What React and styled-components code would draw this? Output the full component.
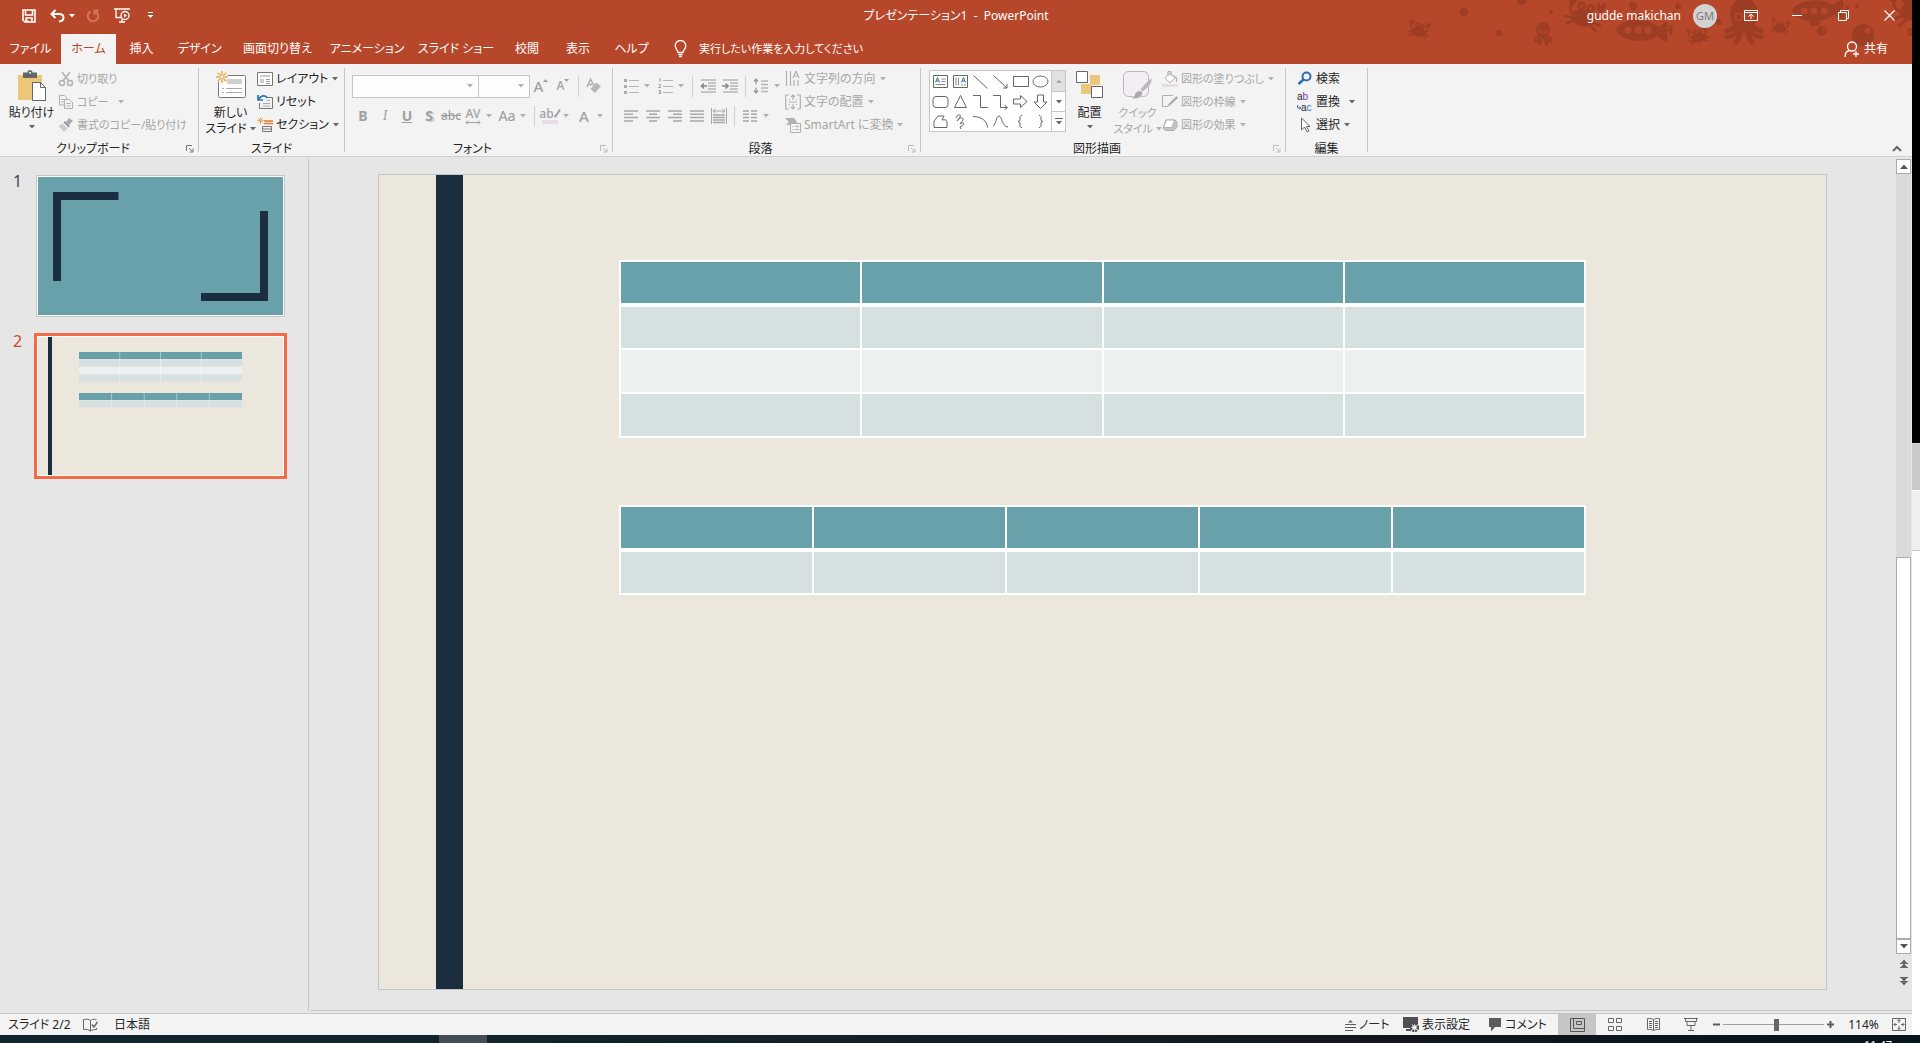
import React, { useState } from "react";
import styled, { createGlobalStyle, css } from "styled-components";

const tabs = [
  { label: "ファイル", width: 61 },
  { label: "ホーム", width: 55 },
  { label: "挿入", width: 51 },
  { label: "デザイン", width: 65 },
  { label: "画面切り替え", width: 91 },
  { label: "アニメーション", width: 88 },
  { label: "スライド ショー", width: 90 },
  { label: "校閲", width: 52 },
  { label: "表示", width: 50 },
  { label: "ヘルプ", width: 57 },
];

const GREY = "#b1b1b1";
const DARK = "#5c5c5c";

/* ---------- icons ---------- */

const Icon = ({ w = 16, h = 16, children, color = "currentColor", sw = 1 }) => (
  <svg width={w} height={h} viewBox={`0 0 ${w} ${h}`} fill="none" stroke={color} strokeWidth={sw} aria-hidden="true">
    {children}
  </svg>
);

const Caret = ({ color = "#666" }) => (
  <svg width="6" height="4" viewBox="0 0 6 4" aria-hidden="true">
    <path d="M0 0h6L3 3.5z" fill={color} />
  </svg>
);

const SaveIcon = () => (
  <Icon w={14} h={14} sw={1.6}>
    <path d="M1 1h12v12H3L1 11z M3.5 1v5h7V1" />
    <path d="M4 13V9h6v4" />
    <path d="M5.5 11v2" />
  </Icon>
);

const UndoIcon = () => (
  <Icon w={15} h={14} sw={2}>
    <path d="M5.5 1L1.5 5l4 4" />
    <path d="M1.5 5H9c6 0 6 7 0 7.500" />
  </Icon>
);

const RedoIcon = () => (
  <Icon w={14} h={14} color="#d4755d" sw={2}>
    <path d="M4.500 2.500A5.200 5.200 0 1 0 9.500 2.500" />
    <path d="M12.500 1.500H8.500V6" />
  </Icon>
);

const ShowIcon = () => (
  <Icon w={17} h={15} sw={1.3}>
    <path d="M0 1h16M2 1v8.500h5M5 14h6M8 11v3" />
    <circle cx="11" cy="7.500" r="4" />
    <path d="M10 5.500v4l3-2z" fill="currentColor" stroke="none" />
  </Icon>
);

const BulbIcon = () => (
  <Icon w={13} h={18} sw={1.3}>
    <path d="M4 12.500C4 10 1.200 9 1.200 5.800a5.300 5.300 0 0 1 10.600 0C11.800 9 9 10 9 12.500z" />
    <path d="M4.500 14.500h4M5 16.500h3" />
  </Icon>
);

const PasteIcon = () => (
  <Icon w={30} h={31}>
    <path d="M1 5h24v25H1z" fill="#edc67c" stroke="none" />
    <path d="M6 2.500h4.500a2.500 2.500 0 0 1 5 0H20V8H6z" fill="#666" stroke="none" />
    <circle cx="13" cy="2.800" r="1" fill="#f3f3f3" stroke="none" />
    <path d="M15.500 12.500h8l5 5v13h-13z" fill="#fff" stroke="#666" />
    <path d="M23.500 12.500v5h5" stroke="#666" />
  </Icon>
);

const NewSlideIcon = () => (
  <Icon w={31} h={30}>
    <rect x="3.500" y="5.500" width="27" height="22" rx="1" fill="#fff" stroke="#777" />
    <path d="M12 9h15v5H12z" fill="#cfcfcf" stroke="none" />
    <path d="M7 18.500h2M11 18.500h16M7 22.500h2M11 22.500h16" stroke="#aaa" />
    <circle cx="7" cy="7" r="6" fill="#f3f3f3" stroke="none" />
    <path d="M7 1v3.500M7 9.500V13M1 7h3.500M9.500 7H13M2.800 2.800L5.200 5.200M8.800 8.800l2.400 2.400M11.200 2.800L8.800 5.200M5.200 8.800l-2.400 2.400" stroke="#e8b04b" strokeWidth="1.600" />
    <circle cx="7" cy="7" r="2" stroke="#e8b04b" />
  </Icon>
);

const CutIcon = () => (
  <Icon color={GREY} sw={1.500}>
    <circle cx="4" cy="12" r="2.500" />
    <circle cx="12" cy="12" r="2.500" />
    <path d="M5.200 9.800L12 1M10.800 9.800L4 1" />
  </Icon>
);

const CopyIcon = () => (
  <Icon color={GREY}>
    <path d="M1.500 1.500h5l2 2V11h-7z" />
    <path d="M3 5.500h3M3 8h3" />
    <path d="M6.500 5.500h5l3 3v6h-8z" fill="#f3f3f3" />
    <path d="M8.500 9.500h4M8.500 12h4" />
  </Icon>
);

const BrushIcon = () => (
  <Icon color="none">
    <path d="M11 1l4 3-4 4-3-3z" fill="#aaa" />
    <path d="M7 4l5 5-1.500 1.500-5-5z" fill="#999" />
    <path d="M4.500 6.500l5 5L6 15 0.500 9z" fill="#cfc8cf" />
  </Icon>
);

const LayoutIcon = () => (
  <Icon color="#777">
    <path d="M.5 1.500h15v13H.5z" fill="#fff" />
    <path d="M3 4h10v2H3z" fill="#ccc" stroke="none" />
    <path d="M3 8h4v4H3z" fill="#ccc" stroke="none" />
    <path d="M9 8.500h4M9 10.500h4M9 12.500h4" stroke="#999" />
  </Icon>
);

const ResetIcon = () => (
  <Icon color="#777">
    <path d="M2.500 9v5.500h13v-11h-5" />
    <path d="M6 9.500h7M6 12h7M10 6.500h3" stroke="#aaa" />
    <path d="M1 1v5h5M1.500 5.500c2-4 7-5 9-1.500" stroke="#2f74b8" strokeWidth="1.700" />
  </Icon>
);

const SectionIcon = () => (
  <Icon color="#777">
    <path d="M7 4h9M7 6.500h9" stroke="#e07b39" strokeWidth="1.500" />
    <path d="M5.500 9.500h9v5h-9zM5.500 12h9" />
    <path d="M3.500 0v7M0 3.500h7M1 1l5 5M6 1L1 6" stroke="#e8a04b" strokeWidth=".8" />
  </Icon>
);

const SizeMark = ({ up }) => (
  <Icon w={5} h={16} color="none">
    <path d={up ? "M0 4h5L2.500 1z" : "M0 1h5L2.500 4z"} fill="#a0a0a0" />
  </Icon>
);

const EraserIcon = () => (
  <Icon color="#a8a8a8">
    <path d="M1 9L4.500 1 8 8M2.300 6.500H6" strokeWidth="1.300" />
    <path d="M10 4.500l5 3.500-6 7-4.500-4z" fill="#bdb5bd" stroke="none" />
  </Icon>
);

const HighlightPen = () => (
  <Icon w={7} h={11} color="#a0a0a0" sw={2}>
    <path d="M6 1.500L2.500 7 .5 9" />
  </Icon>
);

const Bullets = ({ numbered }) => (
  <Icon w={15} h={16} color="#b5b5b5">
    <path d="M5 2.500h10M5 8.500h10M5 14.500h10" strokeWidth="1.200" />
    {numbered ? (
      <path d="M1 0.500h1v3.500M0.500 6.500h2v1.500l-2 1.500h2.500M0.500 12.500h2v3h-2M1 14h1.500" stroke="#999" strokeWidth=".9" />
    ) : (
      <path d="M0 1h3v3H0zM0 7h3v3H0zM0 13h3v3H0z" fill="#aaa" stroke="none" />
    )}
  </Icon>
);

const IndentIcon = ({ out }) => (
  <Icon w={17} h={14} color="#b5b5b5" sw={1.3}>
    <path d="M1 1h15M8 4h8M8 7h8M8 10h8M1 13h15" />
    <path d={out ? "M7 7H1.500M4 4.500L1.500 7 4 9.500" : "M0 7h5.500M3.500 4.500L6 7 3.500 9.500"} stroke="#888" strokeWidth="1.600" />
  </Icon>
);

const LineSpaceIcon = () => (
  <Icon color="#b5b5b5" sw={1.3}>
    <path d="M8 3h7M8 6.500h7M8 10h7M8 13.500h7" />
    <path d="M3 1v5.500M1 3.500L3 1l2 2.500M3 9.500V15M1 12.500L3 15l2-2.500" stroke="#999" />
  </Icon>
);

const alignPaths = {
  left: "M0 1h14M0 4.300h9M0 7.600h14M0 11h9",
  center: "M0 1h14M3 4.300h8M0 7.600h14M3 11h8",
  right: "M0 1h14M5 4.300h9M0 7.600h14M5 11h9",
  justify: "M0 1h14M0 4.300h14M0 7.600h14M0 11h14",
};
const AlignIcon = ({ kind }) => (
  <Icon w={14} h={12} color="#a8a8a8" sw={1.500}>
    <path d={alignPaths[kind]} />
  </Icon>
);

const DistributeIcon = () => (
  <Icon w={16} h={16} color="#a8a8a8">
    <path d="M.5 0v16M15.500 0v16M2 3h12M4.500 1L2 3l2.500 2M11.500 1L14 3l-2.500 2" />
    <path d="M2 7h12M2 9.500h12M2 12h12M2 14.500h12" strokeWidth="1.400" />
  </Icon>
);

const ColumnsIcon = () => (
  <Icon w={14} h={12} color="#a8a8a8" sw={1.500}>
    <path d="M0 1h6M0 4.300h6M0 7.600h6M0 11h6M8 1h6M8 4.300h6M8 7.600h6M8 11h6" />
  </Icon>
);

const TextDirIcon = () => (
  <Icon color={GREY} sw={1.200}>
    <path d="M1.500 0v15M5.500 0v15M9 9v6M13 9v6" />
    <path d="M8 7l3-7 3 7M9 5h4" />
  </Icon>
);

const TextAlignIcon = () => (
  <Icon color={GREY} sw={1.200}>
    <path d="M4 1H.7v14H4M12 1h3.300v14H12M4 8h8M4 5.500h1M11 5.500h1M4 10.500h1M11 10.500h1" />
    <path d="M8 1v5M6 3l2-2 2 2M8 10v5M6 13l2 2 2-2" />
  </Icon>
);

const SmartArtIcon = () => (
  <Icon color={GREY}>
    <path d="M0 1h9l3 4-2 3H1l3-3z" fill="#b1b1b1" stroke="none" />
    <path d="M5.500 6.500h10v9h-10z" fill="#f3f3f3" />
    <path d="M7.500 9.500h1M10 9.500h4M7.500 12.500h1M10 12.500h4" />
  </Icon>
);

const ArrangeIcon = () => (
  <Icon w={28} h={29} color="#666">
    <path d="M14 5h10v10H14zM5 14h10v10H5z" fill="#edc67c" stroke="none" />
    <path d="M.5 1.500h11v11H.5zM15.500 16.500h11v11h-11z" fill="#fff" />
  </Icon>
);

const QuickStyleIcon = () => (
  <Icon w={31} h={31} color="#bdb5bd">
    <rect x="1.500" y="1.500" width="25" height="25" rx="5" fill="#f3eef3" />
    <path d="M29.500 8.500c1 4-3 9-9 13l-2-2C22 15 27 9.500 29.500 8.500z" fill="#b9b9b9" stroke="none" />
    <path d="M19 21c3 1 2 5-2 7-3 1.300-6 1-8 .5 3-1 3-3 4-5 1.500-2.500 4-3.500 6-2.500z" fill="#b0a8b0" stroke="#f3f3f3" />
  </Icon>
);

const FillIcon = () => (
  <Icon color={GREY}>
    <path d="M0 13h16v3H0z" fill="#e6dde6" stroke="none" />
    <path d="M3 7l5-5 5 5-5 5z" fill="#fff" />
    <path d="M6 5V1.500c0-1.500 3-1.500 3 0V5M11 5c3 0 4 2 3.500 6" strokeWidth="1.200" />
  </Icon>
);

const OutlineIcon = () => (
  <Icon color={GREY}>
    <path d="M11 1.500H.5v11h6" />
    <path d="M14.500 2L7 9.500l-1.500 3 3-1.500L16 4z" fill="#aaa" stroke="none" />
  </Icon>
);

const EffectIcon = () => (
  <Icon color={GREY}>
    <path d="M4 3h9l2 2v5l-3 3.500H3l-2-2z" fill="#c4c4c4" />
    <path d="M4.500 3h8L10 10.500H1.500z" fill="#fff" />
  </Icon>
);

const FindIcon = () => (
  <Icon color="#2f6db5" sw={2}>
    <circle cx="9.500" cy="5.500" r="4" />
    <path d="M6.500 8.500L1.500 13" strokeWidth="2.600" />
  </Icon>
);

const SelectIcon = () => (
  <Icon color="#666">
    <path d="M4.500 1v12l3-3 2.500 5 2-1-2.500-4.500H13z" fill="#fff" />
  </Icon>
);

const ReplaceMark = () => (
  <Icon w={4} h={5} color="#2f74b8">
    <path d="M.5 0v3H4M2.500 1.500L4 3 2.500 4.500" />
  </Icon>
);

const Launcher = ({ dim }) => (
  <Icon w={8} h={8} color={dim ? "#bbb" : "#777"}>
    <path d="M.5 6V.5H6M3 3l3.500 3.500M7 3.500V7H3.500" />
  </Icon>
);

const shapes = [
  <><path d="M1.500 2.500h14v12h-14z" /><path d="M9.500 6h4M9.500 8.500h4M3.500 11.500h10" stroke="#888" /><path d="M3.500 9.500l2-5 2 5M4.200 8h2.600" stroke="#2f6db5" /></>,
  <><path d="M1.500 2.500h14v12h-14z" /><path d="M4 4.500v8M6.500 4.500v8M10 11v2M13 11v2" stroke="#888" /><path d="M9.500 9.500l2-5 2 5M10.200 8h2.600" stroke="#2f6db5" /></>,
  <path d="M1.500 2.500l14 13" />,
  <path d="M1.500 2.500l13.500 12.500M15 11v4h-4" />,
  <path d="M1.500 3.500h15v10h-15z" />,
  <ellipse cx="8.500" cy="8.500" rx="7.500" ry="5.500" />,
  <rect x="1" y="3.500" width="15" height="11" rx="3" />,
  <path d="M8.500 2.500l6 12h-12z" />,
  <path d="M1 2.500h7.500v12H16" />,
  <path d="M1 2.500h7.500v12H15M12.500 12l3 2.500-3 2.500" />,
  <path d="M1.500 6h7V2.500L15 8.500l-6.500 6V11h-7z" />,
  <path d="M5.500 2h6v7H15l-6.500 6.500L2 9h3.500z" />,
  <path d="M2 14.500V8L6 3h6l-2 4c5-1 5 1 5 4v3.500z" />,
  <path d="M4 5c1-4 6-4 4-1L5 8c3-4 7-4 6-1l-3 4c3-2 5-1 3 1l-3 2 1 2" />,
  <path d="M1 3.500c8 0 14 4 14.500 11" />,
  <path d="M1 13c3-1 3-10 6-10s3 11 9 11" />,
  <path d="M10 2.500H9L8 3.500v4L6 8.500l2 1v4l1 1h1" />,
  <path d="M7 2.500h1l1 1v4l2 1-2 1v4l-1 1H7" />,
];

/* ---------- title bar sea life ---------- */

const Crab = ({ x, y, s = 1, r = 0 }) => (
  <g transform={`translate(${x} ${y}) rotate(${r}) scale(${s})`}>
    <ellipse cx="0" cy="2" rx="7" ry="4.500" fill="#9c3d24" />
    <circle cx="-3" cy="-5" r="1.800" />
    <circle cx="3" cy="-5" r="1.800" />
    <path d="M-6 1C-10 0-10-3-9-5M6 1C10 0 10-3 9-5M-6 3l-6 1M-5 5l-5 3M6 3l6 1M5 5l5 3M-3-3v3M3-3v3" />
    <path d="M-9-4c-4-2-3-6-1-7l1 3 2-2c1 3 0 5-2 6zM9-4c4-2 3-6 1-7l-1 3-2-2c-1 3 0 5 2 6z" fill="#9c3d24" stroke="none" />
  </g>
);

const Octopus = ({ x, y, s = 1 }) => (
  <g transform={`translate(${x} ${y}) scale(${s})`}>
    <ellipse cx="0" cy="-8" rx="14" ry="16" fill="#9c3d24" stroke="none" />
    <path d="M-6 5c-1 7-6 10-11 10M6 5c1 7 6 10 11 10M-3 6c0 8-2 11-5 14M3 6c0 8 2 11 5 14M-8 3c-2 5-5 4-9 6M8 3c2 5 5 4 9 6" strokeWidth="5" strokeLinecap="round" />
    <circle cx="-5" cy="-5" r="3.500" stroke="#b7472a" strokeWidth="2" />
    <circle cx="6" cy="-5" r="3.500" stroke="#b7472a" strokeWidth="2" />
  </g>
);

const Submarine = ({ x, y, flip = 1 }) => (
  <g transform={`translate(${x} ${y})`}>
    <path d="M-24 0C-20-12 8-14 18-3l8-5c3 3 2 5-1 8 3 3 3 8 1 12l-9-6C8 14-20 12-24 0zM-8-9l3-6h8l1 6z" fill="#9c3d24" stroke="none" transform={`scale(1 ${flip})`} />
    <path d="M24 0h8M31-5v10" strokeWidth="3" />
    <g fill="#b7472a" stroke="none">
      <circle cx="-12" cy="0" r="3.500" />
      <circle cx="-2" cy="0" r="3.500" />
      <circle cx="8" cy="0" r="3.500" />
    </g>
  </g>
);

const Bubble = ({ x, y, r }) => (
  <g stroke="none">
    <circle cx={x} cy={y} r={r} fill="#9c3d24" />
    <circle cx={x + r * 0.4} cy={y - r * 0.4} r={r * 0.25} fill="#b7472a" />
  </g>
);

const SeaLife = () => (
  <Decoration width="512" height="64" viewBox="1400 0 512 64" fill="none" stroke="#9c3d24" strokeWidth="1.500" aria-hidden="true">
    <Crab x={1419} y={30} s={0.9} r={12} />
    <Crab x={1584} y={15} s={1.6} r={15} />
    <Crab x={1698} y={36} s={0.9} r={-12} />
    <Crab x={1780} y={27} s={0.8} r={10} />
    <Crab x={1914} y={6} s={2} r={-15} />
    <Octopus x={1543} y={34} s={0.5} />
    <Octopus x={1744} y={22} s={1} />
    <Submarine x={1640} y={30} />
    <Submarine x={1816} y={11} flip={-1} />
    {[[1464, 12, 4], [1499, 33, 3], [1522, 0, 5], [1551, 12, 2], [1633, 6, 4], [1678, 6, 3], [1719, 22, 3], [1822, 31, 5], [1857, 6, 2], [1863, 35, 11], [1911, 32, 4]].map(
      ([x, y, r]) => <Bubble key={x} x={x} y={y} r={r} />
    )}
  </Decoration>
);

/* ---------- small building blocks ---------- */

const Small = ({ icon, label, caret, disabled, far }) => (
  <SmallButton type="button" disabled={disabled} $far={far}>
    <IconSlot>{icon}</IconSlot>
    <span>{label}</span>
    {caret && <Caret color={disabled ? GREY : "#666"} />}
  </SmallButton>
);

const Tool = ({ children, caret, name }) => (
  <>
    <ToolButton type="button" disabled aria-label={name}>{children}</ToolButton>
    {caret && <CaretButton type="button" disabled aria-label={`${name} オプション`}><Caret color={GREY} /></CaretButton>}
  </>
);

const RibbonGroup = ({ name, width, pad = 5, launcher, dim, children }) => (
  <>
    <Group $w={width}>
      <GroupBody $pad={pad}>{children}</GroupBody>
      <GroupFooter>
        <span>{name}</span>
        {launcher && <LaunchButton type="button" aria-label={`${name} 詳細`}><Launcher dim={dim} /></LaunchButton>}
      </GroupFooter>
    </Group>
    <GroupLine />
  </>
);

const SlideTable = ({ columns, rows }) => (
  <DataTable>
    <thead>
      <tr>{Array.from({ length: columns }, (_, i) => <th key={i} />)}</tr>
    </thead>
    <tbody>
      {Array.from({ length: rows }, (_, r) => (
        <tr key={r}>{Array.from({ length: columns }, (_, i) => <td key={i} />)}</tr>
      ))}
    </tbody>
  </DataTable>
);

const MiniTable = ({ y, columns, fills }) => (
  <g>
    {fills.map((f, i) => <rect key={i} x="41" y={y + i * 7.5} width="163" height="7" fill={f} />)}
    {Array.from({ length: columns - 1 }, (_, i) => (
      <path key={i} d={`M${41 + (163 / columns) * (i + 1)} ${y}v${fills.length * 7.5}`} stroke="#fff" strokeOpacity=".4" />
    ))}
  </g>
);

/* ---------- page ---------- */

const App = () => {
  const [activeTab, setActiveTab] = useState("ホーム");
  const [slide, setSlide] = useState(2);
  const [zoom, setZoom] = useState(53);

  return (
    <Screen>
      <GlobalStyle />
      <Desktop>
        <Window>
          <Header>
            <SeaLife />
            <TitleRow>
              <QuickAccess>
                <QuickButton type="button" $w={30} aria-label="上書き保存"><SaveIcon /></QuickButton>
                <QuickButton type="button" $w={36} aria-label="元に戻す"><UndoIcon /><Caret color="#fff" /></QuickButton>
                <QuickButton type="button" $w={26} aria-label="繰り返し"><RedoIcon /></QuickButton>
                <QuickButton type="button" $w={32} aria-label="最初から開始"><ShowIcon /></QuickButton>
                <QuickButton type="button" $w={24} aria-label="カスタマイズ">
                  <Icon w={7} h={7}><path d="M1 .5h5" /><path d="M.5 3h6L3.500 6z" fill="currentColor" stroke="none" /></Icon>
                </QuickButton>
              </QuickAccess>
              <Title>プレゼンテーション1&nbsp; -&nbsp; PowerPoint</Title>
              <WindowTools>
                <span>gudde makichan</span>
                <Avatar>GM</Avatar>
                <WindowButton type="button" aria-label="リボンの表示オプション">
                  <Icon w={14} h={11}><path d="M.5.5h13v10H.5zM.5 2.500h13M7 9V4.500M4.500 6.500L7 4.200l2.500 2.300" /></Icon>
                </WindowButton>
                <WindowButton type="button" aria-label="最小化"><Icon w={10} h={11}><path d="M0 5.500h10" /></Icon></WindowButton>
                <WindowButton type="button" aria-label="元に戻す (縮小)">
                  <Icon w={11} h={11}><path d="M.5 2.500h8v8h-8zM2.500 2.500v-2h8v8h-2" /></Icon>
                </WindowButton>
                <WindowButton type="button" aria-label="閉じる"><Icon w={11} h={11} sw={1.2}><path d="M.5.5l10 10M10.500.5l-10 10" /></Icon></WindowButton>
              </WindowTools>
            </TitleRow>
            <TabRow>
              {tabs.map((tab) => (
                <Tab key={tab.label} type="button" $w={tab.width} $active={tab.label === activeTab} onClick={() => setActiveTab(tab.label)}>
                  {tab.label}
                </Tab>
              ))}
              <TellMe>
                <BulbIcon />
                <input type="text" aria-label="操作アシスト" placeholder="実行したい作業を入力してください" />
              </TellMe>
              <Share type="button">
                <Icon w={16} h={17} sw={1.3}><circle cx="8" cy="5.500" r="4.500" /><path d="M1 16c0-4 2-6 4.500-6.500M12 10v6M9 13h6" /></Icon>
                共有
              </Share>
            </TabRow>
          </Header>

          <Ribbon>
            <RibbonGroup name="クリップボード" width={198} launcher>
              <BigButton type="button" $w={53}><PasteIcon /><span>貼り付け</span><Caret /></BigButton>
              <SmallColumn $compact>
                <Small icon={<CutIcon />} label="切り取り" disabled />
                <Small icon={<CopyIcon />} label="コピー" caret far disabled />
                <Small icon={<BrushIcon />} label="書式のコピー/貼り付け" disabled />
              </SmallColumn>
            </RibbonGroup>

            <RibbonGroup name="スライド" width={145}>
              <BigButton type="button" $w={53}>
                <NewSlideIcon /><span>新しい</span><Inline>スライド <Caret /></Inline>
              </BigButton>
              <SmallColumn>
                <Small icon={<LayoutIcon />} label="レイアウト" caret />
                <Small icon={<ResetIcon />} label="リセット" />
                <Small icon={<SectionIcon />} label="セクション" caret />
              </SmallColumn>
            </RibbonGroup>

            <RibbonGroup name="フォント" width={267} pad={7} launcher dim>
              <ToolRows>
                <ToolRow>
                  <Combo $w={127}><select aria-label="フォント" disabled /><Caret color={GREY} /></Combo>
                  <Combo $w={51}><select aria-label="フォント サイズ" disabled /><Caret color={GREY} /></Combo>
                  <Tool name="拡大"><Glyph $size={15}>A</Glyph><SizeMark up /></Tool>
                  <Tool name="縮小"><Glyph $size={12}>A</Glyph><SizeMark /></Tool>
                  <ToolLine />
                  <Tool name="書式のクリア"><EraserIcon /></Tool>
                </ToolRow>
                <ToolRow>
                  <Tool name="太字"><Glyph $bold>B</Glyph></Tool>
                  <Tool name="斜体"><Glyph $italic>I</Glyph></Tool>
                  <Tool name="下線"><Glyph $bold $line="underline">U</Glyph></Tool>
                  <Tool name="影"><Glyph $bold $shadow>S</Glyph></Tool>
                  <Tool name="取り消し線"><Glyph $size={12} $line="line-through">abc</Glyph></Tool>
                  <Tool name="文字の間隔" caret><Stack><Glyph $size={12}>AV</Glyph><Icon w={16} h={5} color="#a0a0a0"><path d="M1 2.500h14M3 .5l-2 2 2 2M13 .5l2 2-2 2" /></Icon></Stack></Tool>
                  <Tool name="文字種の変換" caret><Glyph>Aa</Glyph></Tool>
                  <ToolLine />
                  <Tool name="蛍光ペン" caret><Stack><PenRow><Glyph $size={12}>ab</Glyph><HighlightPen /></PenRow><Swatch /></Stack></Tool>
                  <Tool name="フォントの色" caret><Glyph $size={15}>A</Glyph></Tool>
                </ToolRow>
              </ToolRows>
            </RibbonGroup>

            <RibbonGroup name="段落" width={307} pad={7} launcher dim>
              <ToolRows $w={165}>
                <ToolRow>
                  <Tool name="箇条書き" caret><Bullets /></Tool>
                  <Tool name="段落番号" caret><Bullets numbered /></Tool>
                  <ToolLine />
                  <Tool name="インデントを減らす"><IndentIcon out /></Tool>
                  <Tool name="インデントを増やす"><IndentIcon /></Tool>
                  <ToolLine />
                  <Tool name="行間" caret><LineSpaceIcon /></Tool>
                </ToolRow>
                <ToolRow>
                  <Tool name="左揃え"><AlignIcon kind="left" /></Tool>
                  <Tool name="中央揃え"><AlignIcon kind="center" /></Tool>
                  <Tool name="右揃え"><AlignIcon kind="right" /></Tool>
                  <Tool name="両端揃え"><AlignIcon kind="justify" /></Tool>
                  <Tool name="均等割り付け"><DistributeIcon /></Tool>
                  <ToolLine />
                  <Tool name="段組み" caret><ColumnsIcon /></Tool>
                </ToolRow>
              </ToolRows>
              <SmallColumn>
                <Small icon={<TextDirIcon />} label="文字列の方向" caret disabled />
                <Small icon={<TextAlignIcon />} label="文字の配置" caret disabled />
                <Small icon={<SmartArtIcon />} label="SmartArt に変換" caret disabled />
              </SmallColumn>
            </RibbonGroup>

            <RibbonGroup name="図形描画" width={364} pad={8} launcher dim>
              <Gallery>
                <ShapeGrid>
                  {shapes.map((shape, i) => (
                    <ShapeButton key={i} type="button" aria-label={`図形 ${i + 1}`}>
                      <Icon w={17} h={17} color="#666">{shape}</Icon>
                    </ShapeButton>
                  ))}
                </ShapeGrid>
                <GalleryScroll>
                  <button type="button" disabled aria-label="上へ"><Icon w={6} h={4} color="none"><path d="M0 4h6L3 .5z" fill="#aaa" /></Icon></button>
                  <button type="button" aria-label="下へ"><Caret /></button>
                  <button type="button" aria-label="その他"><Icon w={8} h={7} color="#666"><path d="M0 .5h8" /><path d="M1 3h6L4 6.500z" fill="#666" stroke="none" /></Icon></button>
                </GalleryScroll>
              </Gallery>
              <BigButton type="button" $w={47}><ArrangeIcon /><span>配置</span><Caret /></BigButton>
              <BigButton type="button" $w={49} $compact disabled>
                <QuickStyleIcon /><span>クイック</span><Inline>スタイル <Caret color={GREY} /></Inline>
              </BigButton>
              <SmallColumn $compact>
                <Small icon={<FillIcon />} label="図形の塗りつぶし" caret disabled />
                <Small icon={<OutlineIcon />} label="図形の枠線" caret disabled />
                <Small icon={<EffectIcon />} label="図形の効果" caret disabled />
              </SmallColumn>
            </RibbonGroup>

            <RibbonGroup name="編集" width={81} pad={11}>
              <SmallColumn>
                <Small icon={<FindIcon />} label="検索" />
                <Small icon={<ReplaceGlyph><span>a<i>b</i></span><span><ReplaceMark />a<b>c</b></span></ReplaceGlyph>} label="置換" caret far />
                <Small icon={<SelectIcon />} label="選択" caret />
              </SmallColumn>
            </RibbonGroup>

            <Collapse type="button" aria-label="リボンを折りたたむ">
              <Icon w={10} h={7} color="#666" sw={2}><path d="M1 6l4-4 4 4" /></Icon>
            </Collapse>
          </Ribbon>

          <Workspace>
            <SlideList>
              <SlideItem>
                <SlideNumber $active={slide === 1}>1</SlideNumber>
                <Thumb type="button" $active={slide === 1} onClick={() => setSlide(1)} aria-label="スライド 1">
                  <svg viewBox="0 0 245 138">
                    <path d="M0 0h245v138H0z" fill="#69a1ab" />
                    <path d="M15 15h65.500v8H23v81h-8zM222 34h8v90h-67v-8h59z" fill="#1b2e40" />
                  </svg>
                </Thumb>
              </SlideItem>
              <SlideItem>
                <SlideNumber $active={slide === 2}>2</SlideNumber>
                <Thumb type="button" $active={slide === 2} onClick={() => setSlide(2)} aria-label="スライド 2">
                  <svg viewBox="0 0 245 138">
                    <path d="M0 0h245v138H0z" fill="#ebe7dc" />
                    <path d="M10 0h4v138h-4z" fill="#1b2e40" />
                    <MiniTable y={15} columns={4} fills={["#69a1ab", "#d5e0e1", "#ebf0f0", "#d5e0e1"]} />
                    <MiniTable y={56} columns={5} fills={["#69a1ab", "#d5e0e1"]} />
                  </svg>
                </Thumb>
              </SlideItem>
            </SlideList>

            <Editor>
              <Stage>
                <Slide>
                  <SlideBar />
                  <SlideContent>
                    <SlideTable columns={4} rows={3} />
                    <SlideTable columns={5} rows={1} />
                  </SlideContent>
                </Slide>
              </Stage>
              <Scrollbar>
                <ScrollArrow type="button" aria-label="上へスクロール"><Icon w={8} h={5} color="none"><path d="M0 5h8L4 .5z" fill="#555" /></Icon></ScrollArrow>
                <ScrollTrack><ScrollThumb /></ScrollTrack>
                <ScrollArrow type="button" aria-label="下へスクロール"><Icon w={8} h={5} color="none"><path d="M0 0h8L4 4.500z" fill="#555" /></Icon></ScrollArrow>
                <PageJump type="button" aria-label="前のスライド"><Icon w={8} h={9} color="#666"><path d="M1 4h6L4 .5zM1 8h6L4 4.500z" fill="#666" stroke="none" /><path d="M0 4.500h8M0 8.500h8" /></Icon></PageJump>
                <PageJump type="button" aria-label="次のスライド"><Icon w={8} h={9} color="#666"><path d="M1 1h6L4 4.500zM1 5h6L4 8.500z" fill="#666" stroke="none" /><path d="M0 .5h8M0 4.500h8" /></Icon></PageJump>
              </Scrollbar>
            </Editor>
          </Workspace>

          <StatusBar>
            <StatusText>スライド 2/2</StatusText>
            <StatusButton type="button" $w={31} aria-label="スペル チェック">
              <Icon w={15} h={14} color="#666"><path d="M7.500 2.500C6 1 3 1 .5 1.500v10c3-.5 5 0 7 1.500V2.500c1-1 3-1.500 6-1M7.500 13c2-1.500 4-1.500 6-1.500V10" /><path d="M9 6.500l2 2.500 3.500-5" strokeWidth="1.400" /></Icon>
            </StatusButton>
            <StatusButton type="button">日本語</StatusButton>
            <StatusRight>
              <StatusButton type="button" $w={58}>
                <Icon w={11} h={12} color={DARK}><path d="M3 3.500h5L5.500 1z" fill={DARK} stroke="none" /><path d="M0 5.500h11M0 8.500h11M0 11.500h8" /></Icon>ノート
              </StatusButton>
              <StatusButton type="button" $w={85}>
                <Icon w={16} h={15} color="none"><path d="M0 0h15v7H9v4H0z" fill="#505050" /><path d="M3 12h5v2H3z" fill="#505050" /><circle cx="11.500" cy="10.500" r="3.500" stroke="#505050" strokeWidth="2.500" strokeDasharray="2 .8" fill="#f3f3f3" /></Icon>表示設定
              </StatusButton>
              <StatusButton type="button" $w={70}>
                <Icon w={14} h={14} color="none"><path d="M1 0h12v9H7l-4 4.500V9H1z" fill="#5c5c5c" /></Icon>コメント
              </StatusButton>
              <ViewButton type="button" $active aria-label="標準"><Icon w={15} h={14} color="#555"><path d="M.5.5h14v13H.5zM3.500.5v10M3.500 10.500h11M6.500 3.500h5v3h-5z" /></Icon></ViewButton>
              <ViewButton type="button" aria-label="スライド一覧"><Icon w={14} h={13} color="#666"><path d="M.5.500h5v4h-5zM8.500.500h5v4h-5zM.5 8.500h5v4h-5zM8.500 8.500h5v4h-5z" /></Icon></ViewButton>
              <ViewButton type="button" aria-label="閲覧表示"><Icon w={13} h={13} color="#666"><path d="M6.500 12.500V1.500C5 .5 3 .5.5.5v11c2.500 0 4.500 0 6 1 1.500-1 3.500-1 6-1V.5c-2.500 0-4.500 0-6 1M2 3.500h3M2 5.500h3M2 7.500h3M2 9.500h3M8 3.500h3M8 5.500h3M8 7.500h3M8 9.500h3" /></Icon></ViewButton>
              <ViewButton type="button" aria-label="スライド ショー"><Icon w={14} h={13} color="#666"><path d="M0 .5h14M1.500.5v3h11v-3M3 3.500v4h8v-4M7 7.500v5M4 12.500h6" /></Icon></ViewButton>
              <ZoomStep type="button" aria-label="縮小"><Icon w={7} h={7} color={DARK} sw={2}><path d="M0 3.500h7" /></Icon></ZoomStep>
              <ZoomRange type="range" min="0" max="100" value={zoom} aria-label="ズーム" onChange={(e) => setZoom(Number(e.target.value))} />
              <ZoomStep type="button" aria-label="拡大"><Icon w={7} h={7} color={DARK} sw={2}><path d="M0 3.500h7M3.500 0v7" /></Icon></ZoomStep>
              <ZoomValue type="button">114%</ZoomValue>
              <StatusButton type="button" aria-label="ウィンドウに合わせる">
                <Icon w={14} h={13} color="#666"><path d="M.5.5h13v12H.5z" /><path d="M7 1.500v3.500M5.500 3L7 1.500 8.500 3M7 11.500V8M5.500 10L7 11.500 8.500 10M2 6.500h3M3.500 5L2 6.500 3.500 8M12 6.500H9M10.500 5L12 6.500 10.500 8" /></Icon>
              </StatusButton>
            </StatusRight>
          </StatusBar>
        </Window>
        <BehindWindow><div /><div /><div /><div /></BehindWindow>
      </Desktop>
      <Taskbar><TaskItem /><Clock>11:47</Clock></Taskbar>
    </Screen>
  );
};

/* ---------- styles ---------- */

const GlobalStyle = createGlobalStyle`
  *, *::before, *::after { box-sizing: border-box; }
  body { margin: 0; background: #000; }
  body, button, input, select {
    font-family: "Noto Sans", "Noto Sans CJK JP", sans-serif;
    font-size: 12px;
    line-height: 16px;
    font-feature-settings: "palt";
  }
  button {
    background: none;
    border: 0;
    padding: 0;
    color: inherit;
    white-space: nowrap;
  }
  svg { display: block; flex-shrink: 0; }
`;

const Screen = styled.div`
  display: flex;
  flex-direction: column;
  height: 100vh;
  overflow: hidden;
`;

const Desktop = styled.div`
  display: flex;
  flex: 1;
  min-height: 0;
`;

const Window = styled.main`
  display: flex;
  flex-direction: column;
  flex: 1;
  min-width: 0;
  background: #e6e6e6;
  color: #262626;
`;

const Header = styled.header`
  position: relative;
  background: #b7472a;
  color: #fff;
`;

const Decoration = styled.svg`
  position: absolute;
  top: 0;
  right: 0;
`;

const TitleRow = styled.div`
  position: relative;
  display: grid;
  grid-template-columns: 1fr auto 1fr;
  align-items: center;
  height: 34px;
  padding-bottom: 3px;
`;

const QuickAccess = styled.div`
  display: flex;
  padding-left: 14px;
`;

const QuickButton = styled.button`
  display: flex;
  align-items: center;
  justify-content: center;
  gap: 4px;
  width: ${(p) => p.$w}px;
  height: 28px;
`;

const Title = styled.div`
  white-space: pre;
`;

const WindowTools = styled.div`
  display: flex;
  align-items: center;
  justify-content: flex-end;
`;

const Avatar = styled.div`
  width: 24px;
  height: 24px;
  margin: 0 11px 0 12px;
  border-radius: 50%;
  background: #d2d2d2;
  color: #7b7b7b;
  font-size: 11px;
  line-height: 24px;
  text-align: center;
`;

const WindowButton = styled.button`
  display: grid;
  place-items: center;
  width: 46px;
  height: 30px;
`;

const TabRow = styled.nav`
  position: relative;
  display: flex;
  height: 30px;
`;

const Tab = styled.button`
  width: ${(p) => p.$w}px;
  ${(p) => p.$active && css`
    background: #f3f3f3;
    color: #b7472a;
  `}
`;

const TellMe = styled.label`
  display: flex;
  align-items: center;
  gap: 12px;
  padding-left: 14px;

  input {
    width: 220px;
    padding: 0;
    border: 0;
    background: none;
    color: #fff;
    font-size: 11px;
    outline: none;
    &::placeholder { color: #fff; opacity: 1; }
  }
`;

const Share = styled.button`
  display: flex;
  align-items: center;
  gap: 4px;
  margin-left: auto;
  padding-right: 24px;
`;

const Ribbon = styled.section`
  display: flex;
  height: 93px;
  padding-top: 4px;
  background: #f3f3f3;
  border-bottom: 1px solid #d0d0d0;
`;

const Group = styled.div`
  display: flex;
  flex-direction: column;
  flex-shrink: 0;
  width: ${(p) => p.$w}px;
`;

const GroupLine = styled.div`
  width: 1px;
  height: 84px;
  background: #c6c6c6;
`;

const GroupBody = styled.div`
  display: flex;
  height: 74px;
  padding-left: ${(p) => p.$pad}px;
`;

const GroupFooter = styled.div`
  display: flex;
  align-items: center;
  height: 14px;
  line-height: 14px;

  span { flex: 1; text-align: center; }
`;

const LaunchButton = styled.button`
  width: 12px;
  height: 8px;
`;

const BigButton = styled.button`
  display: flex;
  flex-direction: column;
  align-items: center;
  width: ${(p) => p.$w}px;
  height: 69px;
  padding-top: 2px;
  font-size: ${(p) => (p.$compact ? 11 : 12)}px;

  > svg:first-child { margin-bottom: auto; }
  > svg:last-child { margin: 4px 0 8px; }
  &:disabled { color: #a6a6a6; }
`;

const Inline = styled.span`
  display: flex;
  align-items: center;
  gap: 3px;
  height: 16px;
`;

const SmallColumn = styled.div`
  display: grid;
  grid-template-rows: 22px 23px 23px;
  align-content: start;

  span { font-size: ${(p) => (p.$compact ? 11 : 12)}px; }
`;

const SmallButton = styled.button`
  display: flex;
  align-items: center;
  gap: 3px;
  text-align: left;

  > svg { margin-left: ${(p) => (p.$far ? 6 : 1)}px; }
  &:disabled { color: #a6a6a6; }
`;

const IconSlot = styled.span`
  width: 16px;
`;

const ReplaceGlyph = styled.span`
  display: grid;
  justify-items: start;
  font-family: "Liberation Sans", sans-serif;
  line-height: 11px;

  && span { display: flex; align-items: center; font-size: 10px; }
  i { color: #8040a8; font-style: normal; }
  b { color: #2f74b8; font-weight: 400; }
`;

const ToolRows = styled.div`
  display: flex;
  flex-direction: column;
  width: ${(p) => (p.$w ? `${p.$w}px` : "auto")};
  padding-top: 3px;
`;

const ToolRow = styled.div`
  display: flex;
  align-items: center;
  height: 30px;
`;

const ToolButton = styled.button`
  display: flex;
  align-items: center;
  justify-content: center;
  width: 22px;
  height: 24px;
  color: #a0a0a0;
`;

const CaretButton = styled.button`
  display: grid;
  place-items: center;
  width: 10px;
  height: 24px;
  margin-right: 2px;
`;

const ToolLine = styled.div`
  width: 1px;
  height: 21px;
  margin: 0 4px;
  background: #d0d0d0;
`;

const Combo = styled.label`
  display: flex;
  align-items: center;
  width: ${(p) => p.$w}px;
  height: 23px;
  padding-right: 5px;
  border: 1px solid #c6c6c6;
  background: #fdfdfd;

  & + & { border-left: 0; }

  select {
    flex: 1;
    min-width: 0;
    height: 100%;
    border: 0;
    background: none;
    appearance: none;
  }
`;

const Glyph = styled.span`
  font-size: ${(p) => p.$size || 14}px;
  font-weight: ${(p) => (p.$bold ? 700 : 500)};
  font-style: ${(p) => (p.$italic ? "italic" : "normal")};
  font-family: ${(p) => (p.$italic ? '"Liberation Serif", serif' : "inherit")};
  text-decoration: ${(p) => p.$line || "none"};
  text-shadow: ${(p) => (p.$shadow ? "2px 1px 1px #ccc" : "none")};
`;

const Stack = styled.span`
  display: flex;
  flex-direction: column;
  align-items: center;
  line-height: 12px;

  ${Glyph} { line-height: 12px; }
`;

const PenRow = styled.span`
  display: flex;
`;

const Swatch = styled.span`
  width: 16px;
  height: 4px;
  background: #e6dde6;
`;

const Gallery = styled.div`
  display: flex;
  width: 137px;
  height: 62px;
  margin-top: 2px;
  background: #fff;
  border: 1px solid #c6c6c6;
`;

const ShapeGrid = styled.div`
  display: grid;
  grid-template-columns: repeat(6, 20px);
  grid-template-rows: repeat(3, 20px);
  width: 121px;
`;

const ShapeButton = styled.button`
  display: grid;
  place-items: center;
`;

const GalleryScroll = styled.div`
  display: grid;
  grid-template-rows: repeat(3, 20px);
  flex: 1;
  border-left: 1px solid #c6c6c6;

  button {
    display: grid;
    place-items: center;
    & + button { border-top: 1px solid #c6c6c6; }
    &:disabled { background: #e1e1e1; }
  }
`;

const Collapse = styled.button`
  align-self: flex-end;
  width: 30px;
  height: 16px;
  margin-left: auto;
  padding-left: 10px;
`;

const Workspace = styled.div`
  display: flex;
  flex: 1;
  min-height: 0;
  padding-top: 2px;
`;

const SlideList = styled.aside`
  display: flex;
  flex-direction: column;
  flex-shrink: 0;
  gap: 14px;
  width: 309px;
  margin-bottom: 2px;
  padding-top: 14px;
  border-right: 1px solid #c6c6c6;
`;

const SlideItem = styled.div`
  display: grid;
  grid-template-columns: 34px 253px;
`;

const SlideNumber = styled.span`
  padding-left: 13px;
  font-size: 16px;
  color: ${(p) => (p.$active ? "#d24726" : "#444")};
`;

const Thumb = styled.button`
  padding: 1px;
  border: 3px solid transparent;
  background: #fff padding-box;
  outline: ${(p) => (p.$active ? "none" : "1px solid #c6c6c6")};
  outline-offset: -3px;
  ${(p) => p.$active && css`
    border-color: #f26a48;
  `}

  svg { width: 100%; height: auto; }
`;

const Editor = styled.section`
  display: flex;
  flex: 1;
  min-width: 0;
  margin: 0 0 2px 2px;
  border-bottom: 1px solid #c6c6c6;
`;

const Stage = styled.div`
  display: flex;
  flex: 1;
  min-width: 0;
  padding: 15px 69px 20px 67px;
`;

const Slide = styled.article`
  display: flex;
  flex: 1;
  min-width: 0;
  padding-left: 57px;
  background: #ebe7dc;
  border: 1px solid #c6c6c6;
`;

const SlideBar = styled.div`
  width: 27px;
  background: #1b2e40;
`;

const SlideContent = styled.div`
  display: flex;
  flex-direction: column;
  flex: 1;
  gap: 67px;
  padding: 85px 240px 0 156px;
`;

const DataTable = styled.table`
  width: 100%;
  table-layout: fixed;
  border-collapse: collapse;
  border: 2px solid #fff;

  th, td {
    height: 44px;
    padding: 0;
    border: 2px solid #fff;
    background: #d5e0e1;
  }
  th {
    background: #69a1ab;
    border-bottom: 4px solid #fff;
  }
  tr:nth-child(even) td { background: #ebf0f0; }
`;

const Scrollbar = styled.div`
  display: flex;
  flex-direction: column;
  width: 16px;
  padding: 0 1px 20px 0;
`;

const ScrollArrow = styled.button`
  display: grid;
  place-items: center;
  height: 15px;
  background: #fff;
  border: 1px solid #ababab;
`;

const ScrollTrack = styled.div`
  display: flex;
  flex: 1;
  align-items: flex-end;
  background: #dadada;
`;

const ScrollThumb = styled.div`
  width: 100%;
  height: 50%;
  background: #fff;
  border: 1px solid #ababab;
`;

const PageJump = styled.button`
  display: grid;
  place-items: center;
  height: 18px;
`;

const StatusBar = styled.footer`
  display: flex;
  align-items: center;
  height: 22px;
  padding: 0 6px 0 8px;
  background: #f3f3f3;
  border-top: 1px solid #c6c6c6;
`;

const StatusText = styled.span`
  width: 75px;
  white-space: nowrap;
`;

const StatusButton = styled.button`
  display: flex;
  align-items: center;
  gap: 3px;
  width: ${(p) => (p.$w ? `${p.$w}px` : "auto")};
`;

const StatusRight = styled.div`
  display: flex;
  align-items: center;
  margin-left: auto;
`;

const ViewButton = styled.button`
  display: grid;
  place-items: center;
  width: 38px;
  height: 21px;
  background: ${(p) => (p.$active ? "#c6c6c6" : "transparent")};
`;

const ZoomStep = styled.button`
  display: grid;
  place-items: center;
  width: 13px;
  height: 20px;
`;

const ZoomRange = styled.input`
  width: 101px;
  height: 12px;
  margin: 0;
  background: linear-gradient(#a0a0a0, #a0a0a0) center / 100% 1px no-repeat;
  appearance: none;

  &::-webkit-slider-thumb {
    width: 5px;
    height: 12px;
    background: #666;
    appearance: none;
  }
`;

const ZoomValue = styled.button`
  width: 55px;
  padding-right: 2px;
  text-align: center;
`;

/* slice of other windows that stays visible on the right */
const BehindWindow = styled.div`
  display: flex;
  flex-direction: column;
  width: 8px;

  div:nth-child(1) { height: 443px; background: #000; }
  div:nth-child(2) { height: 47px; background: #cacaca; border-top: 1px solid #ddd; }
  div:nth-child(3) { height: 61px; background: #f0f0f0; border-top: 1px solid #fff; border-bottom: 1px solid #c6c6c6; }
  div:nth-child(4) { flex: 1; background: #fff; }
`;

const Taskbar = styled.div`
  display: flex;
  justify-content: space-between;
  height: 8px;
  padding: 0 28px 0 439px;
  overflow: hidden;
  background: linear-gradient(90deg, #10252e, #12212a 40%, #14171c 70%, #04141d);
`;

const TaskItem = styled.div`
  width: 48px;
  height: 100%;
  background: #434e55;
`;

const Clock = styled.span`
  padding-top: 4px;
  color: #fff;
  font-size: 11px;
  line-height: 12px;
`;

export default App;
